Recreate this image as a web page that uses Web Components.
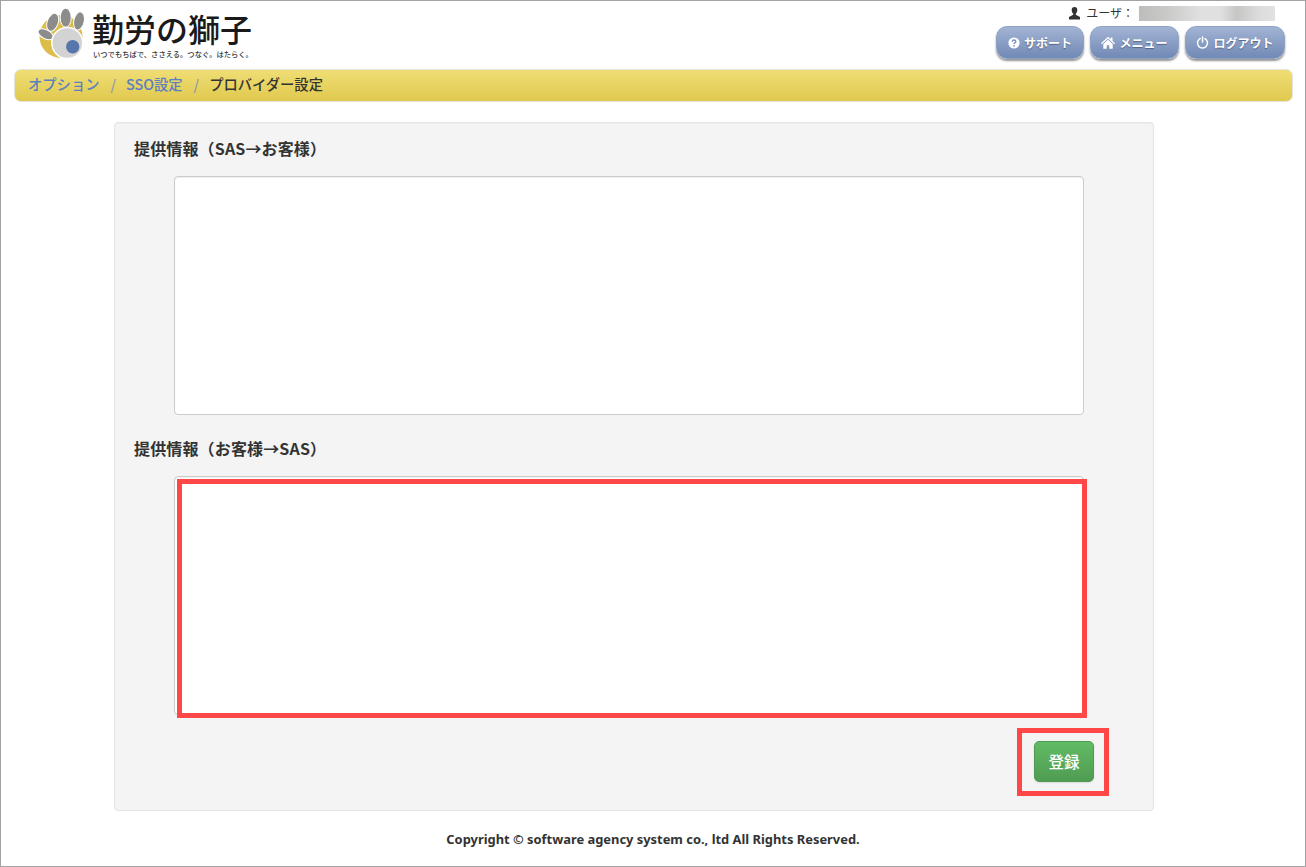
<!DOCTYPE html>
<html lang="ja"><head><meta charset="utf-8"><title>プロバイダー設定</title>
<style>
html,body{margin:0;padding:0;background:#fff}
body{font-family:"Noto Sans","Noto Sans CJK JP",sans-serif;color:#333}
</style></head><body>
<sso-page>
  <app-header slot="header"></app-header>
  <app-breadcrumb slot="crumb"></app-breadcrumb>
  <app-well slot="main">
    <info-section title-text="提供情報（SAS→お客様）"></info-section>
    <info-section title-text="提供情報（お客様→SAS）" marked></info-section>
    <submit-row></submit-row>
  </app-well>
  <app-footer slot="footer"></app-footer>
</sso-page>
<script>
function def(name,html,setup){
  customElements.define(name,class extends HTMLElement{
    connectedCallback(){
      if(this.shadowRoot)return;
      const r=this.attachShadow({mode:'open'});
      r.innerHTML=html;
      if(setup)setup.call(this,r);
    }
  });
}
def('sso-page',`<style>
:host{display:flex;flex-direction:column;box-sizing:border-box;width:1306px;height:867px;border:1px solid #a3a3a3;overflow:hidden;background:#fff}
.c{padding:0 12px 0 13px}
.m{padding:20px 151px 0 113px}
.f{flex:1}
</style>
<slot name="header"></slot><div class="c"><slot name="crumb"></slot></div><div class="m"><slot name="main"></slot></div><div class="f"><slot name="footer"></slot></div>`);

def('app-logo',`<style>
:host{display:flex;align-items:flex-start;gap:0;height:60px}
svg{display:block;flex:none}
.t{margin-left:-1px;display:flex;flex-direction:column}
.n{font:500 32px/36px "Noto Sans CJK JP",sans-serif;color:#1a1a1a;height:40px;margin-top:9px;white-space:nowrap}
.s{font:500 7.300px/9px "Noto Sans CJK JP",sans-serif;color:#333;white-space:nowrap;padding-left:1px}
</style>
<svg width="55" height="60" viewBox="0 0 55 60">
<circle cx="23" cy="35.500" r="21.500" fill="#dcbd4a"/>
<ellipse cx="14.700" cy="21.300" rx="5.500" ry="9.300" transform="rotate(20 14.700 21.300)" fill="#8c8c8c" stroke="#fff" stroke-width="1"/>
<ellipse cx="27.700" cy="16.700" rx="5.500" ry="9.500" fill="#8c8c8c" stroke="#fff" stroke-width="1"/>
<ellipse cx="41" cy="20" rx="5.200" ry="9.300" transform="rotate(12 41 20)" fill="#8c8c8c" stroke="#fff" stroke-width="1"/>
<ellipse cx="7.700" cy="33.300" rx="4.500" ry="8.300" transform="rotate(-62 7.700 33.300)" fill="#8c8c8c" stroke="#fff" stroke-width="1"/>
<circle cx="29.300" cy="42" r="15.500" fill="#d3d3d3" stroke="#fff" stroke-width="1.500"/>
<circle cx="34.700" cy="45.700" r="6.700" fill="#5676ac"/>
</svg>
<div class="t"><div class="n">勤労の獅子</div><div class="s">いつでもちばで、ささえる。つなぐ。はたらく。</div></div>`);

def('nav-button',`<style>
:host{display:inline-flex;box-sizing:border-box;height:33px;align-items:center;justify-content:center;gap:4px;border-radius:11px;border:1px solid #8ea2c8;
background:linear-gradient(#a3b4d4,#7189b5);color:#fff;font:700 12px/1 "Noto Sans CJK JP",sans-serif;box-shadow:0 2px 2px rgba(60,60,60,.55);text-shadow:0 1px 1px rgba(50,60,90,.6);white-space:nowrap}
::slotted(svg){display:block;flex:none}
</style><slot></slot>`);

def('app-header',`<style>
:host{display:flex;justify-content:space-between;height:68px;box-sizing:border-box;padding:0 20px 0 37px;flex:none}
.r{display:flex;flex-direction:column;align-items:flex-end}
.u{display:flex;align-items:center;height:25px;padding-right:10px;padding-bottom:1px;font:400 12px/1 "Noto Sans CJK JP",sans-serif;color:#333;box-sizing:border-box}
.u svg{margin-right:5px}
.b{width:136px;height:15px;margin-left:5px;background:linear-gradient(90deg,#bdbdbc,#c9c9c8 20%,#dfe0df 45%,#e0e0e0 60%,#c6c6c5 72%,#dcdcdc 88%,#e2e2e2)}
.n{display:flex;gap:6px}
</style>
<app-logo></app-logo>
<div class="r">
<div class="u"><svg width="13" height="13" viewBox="0 0 13 13"><path fill="#333" d="M6.500 0C4.600 0 3.700 1.300 3.700 3c0 1.500.6 3 1.500 3.800v1L1 10v2.400h11V10L7.800 7.800v-1C8.700 6 9.300 4.500 9.300 3 9.300 1.300 8.400 0 6.500 0z"/></svg>ユーザ：<span class="b"></span></div>
<div class="n">
<nav-button style="width:88px"><svg width="12" height="12" viewBox="0 0 12 12"><circle cx="6" cy="6" r="5.600" fill="#fff"/><path fill="none" stroke="#7f94bc" stroke-width="1.500" d="M4.200 4.600C4.300 3.500 5 3 6 3s1.800.6 1.800 1.500C7.800 5.600 6 5.600 6 7"/><circle cx="6" cy="8.800" r=".9" fill="#7f94bc"/></svg>サポート</nav-button>
<nav-button style="width:89px"><svg width="14" height="13" viewBox="0 0 14 13"><path fill="#fff" d="M7 .8 0 7.300l.8.900L7 2.600l6.200 5.600.8-.9L11.500 5V1.500H9.700v1.800zM2.300 8v4.800h3.400V9.300h2.600v3.500h3.400V8L7 3.800z"/></svg>メニュー</nav-button>
<nav-button style="width:100px"><svg width="13" height="13" viewBox="0 0 13 13"><path fill="none" stroke="#fff" stroke-width="1.500" stroke-linecap="round" d="M4 2.600a5 5 0 1 0 5 0M6.500 1v5"/></svg>ログアウト</nav-button>
</div></div>`);

def('app-breadcrumb',`<style>
:host{display:flex;align-items:center;box-sizing:border-box;height:33px;border:1px solid #e3e3da;border-radius:7px;background:linear-gradient(#f0de75,#e0c94f);padding:0 13px 2px 13px;font:500 14.300px/1 "Noto Sans CJK JP",sans-serif;color:#333;white-space:nowrap}
a{color:#5a80c0;text-decoration:none}
i{font-style:normal;color:#8f96a8;padding:0 10px 0 11px}
</style><a>オプション</a><i>/</i><a>SSO設定</a><i>/</i><span>プロバイダー設定</span>`);

def('app-well',`<style>
:host{display:block;box-sizing:border-box;width:1040px;height:689px;background:#f4f4f4;border:1px solid #e4e4e4;border-radius:4px;padding:15px 19px 0;box-shadow:inset 0 1px 1px rgba(0,0,0,.03)}
</style><slot></slot>`);

def('info-section',`<style>
:host{display:block;position:relative;height:300px}
h3{margin:0;height:38px;font:700 16px/21px "Noto Sans CJK JP",sans-serif;letter-spacing:.15px;color:#333;white-space:nowrap}
.box{box-sizing:border-box;width:910px;height:239px;margin-left:40px;background:#fff;border:1px solid #ccc;border-radius:4px;box-shadow:inset 0 1px 1px rgba(0,0,0,.07)}
.mark{position:absolute;left:43px;top:41px;box-sizing:border-box;width:910px;height:239px;border:5px solid #ff4747}
</style><h3></h3><div class="box"></div>`,function(r){
  r.querySelector('h3').textContent=this.getAttribute('title-text');
  if(this.hasAttribute('marked')){const d=document.createElement('div');d.className='mark';r.append(d)}
});

def('submit-row',`<style>
:host{display:flex;justify-content:flex-end;position:relative;width:960px;box-sizing:border-box;padding-top:3px}
button{box-sizing:border-box;width:60px;height:41px;border:1px solid #4f9a50;border-radius:5px;background:linear-gradient(#62bb65,#4f9c52);color:#fff;font:500 15.500px/1 "Noto Sans CJK JP",sans-serif;padding:0;box-shadow:0 1px 2px rgba(0,0,0,.1)}
.mark{position:absolute;right:-15px;top:-10px;box-sizing:border-box;width:92px;height:68px;border:5px solid #ff4747}
</style><button>登録</button><div class="mark"></div>`);

def('app-footer',`<style>
:host{display:block;text-align:center;padding-top:20px;font:700 12.900px/17px "Noto Sans","Noto Sans CJK JP",sans-serif;color:#333}
</style>Copyright © software agency system co., ltd All Rights Reserved.`);
</script>
</body></html>
